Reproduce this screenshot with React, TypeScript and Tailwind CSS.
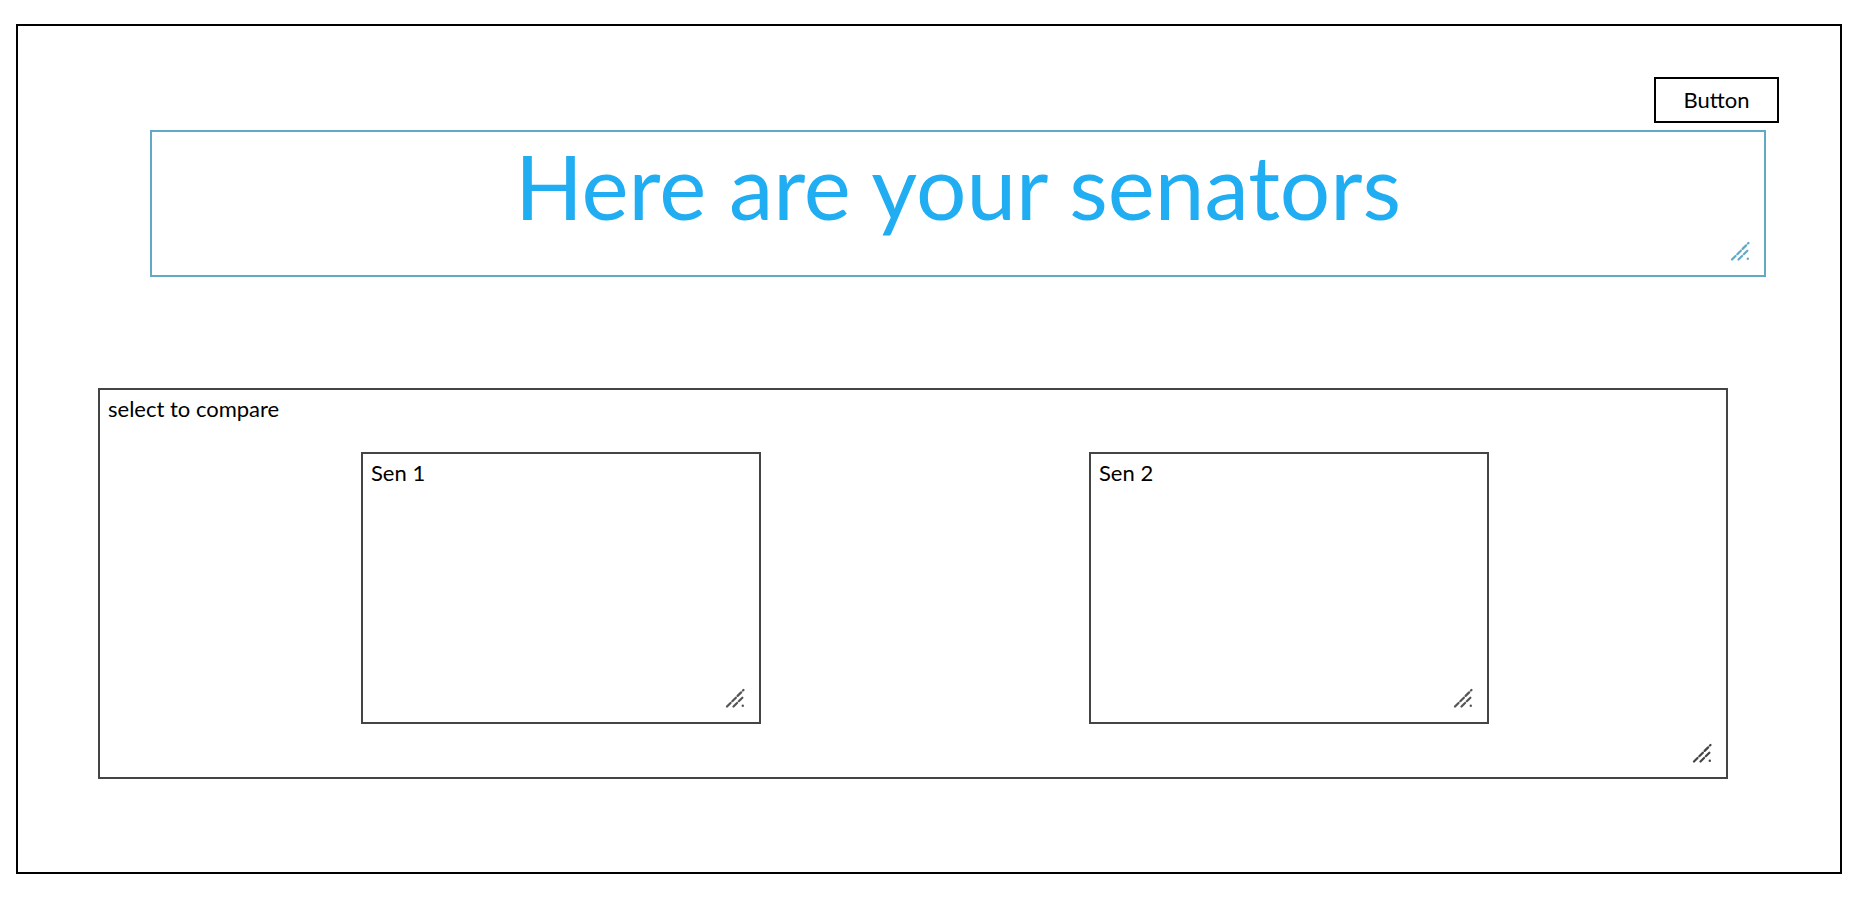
import React from "react";

function Grip({ color }: { color: string }) {
  return (
    <svg
      viewBox="0 0 20 20"
      className="pointer-events-none absolute bottom-[14px] right-[14px] h-[20px] w-[20px]"
      fill="none"
      stroke={color}
      strokeWidth={2.2}
      strokeLinecap="round"
      strokeDasharray="5 2.5"
    >
      <path d="M2 18.5L18.5 2" />
      <path d="M8.5 18.5L18.5 8.5" />
      <circle cx="17.8" cy="17.8" r="1.2" fill={color} stroke="none" />
    </svg>
  );
}

function SenBox({ label }: { label: string }) {
  return (
    <div className="relative h-[272px] w-[400px] border-2 border-[#444444] pl-[8px] pt-[6px]">
      <p className="text-[22px] leading-[26px] text-black">{label}</p>
      <Grip color="#555555" />
    </div>
  );
}

export default function App() {
  return (
    <div className="min-h-screen w-full bg-white font-['Lato','Liberation_Sans',sans-serif] pl-[16px] pt-[24px]">
      <div className="h-[850px] w-[1826px] border-2 border-black">
        <div className="flex justify-end pr-[61px] pt-[51px]">
          <button className="h-[46px] w-[125px] border-2 border-black bg-white text-[22px] leading-none text-black">
            Button
          </button>
        </div>

        <div className="relative ml-[132px] mt-[7px] h-[147px] w-[1616px] border-2 border-[#62a8c7] pt-[10px] text-center">
          <h1 className="text-[89px] font-normal leading-[88px] text-[#20adf2]">
            Here are your senators
          </h1>
          <Grip color="#62a8c7" />
        </div>

        <div className="relative ml-[80px] mt-[111px] h-[391px] w-[1630px] border-2 border-[#444444] pl-[8px] pt-[6px]">
          <p className="text-[22px] leading-[26px] text-black">select to compare</p>
          <div className="mt-[30px] flex gap-[328px] pl-[253px]">
            <SenBox label="Sen 1" />
            <SenBox label="Sen 2" />
          </div>
          <Grip color="#444444" />
        </div>
      </div>
    </div>
  );
}
